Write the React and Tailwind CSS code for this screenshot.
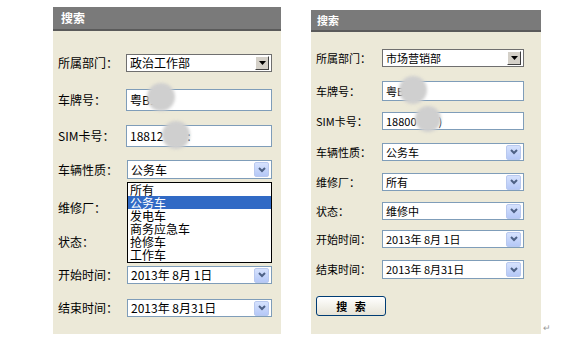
import React from "react";

const font = "font-['Noto_Sans_CJK_SC','Noto_Sans',sans-serif]";

function ClassicArrow() {
  return (
    <div className="w-[14px] h-[14px] bg-[#d4d0c8] border-t border-l border-t-white border-l-white border-b border-r border-b-[#404040] border-r-[#404040] flex items-center justify-center">
      <svg width="7" height="4" viewBox="0 0 7 4">
        <path d="M0 0h7L3.5 4z" fill="#000" />
      </svg>
    </div>
  );
}

function XpArrow() {
  return (
    <div className="w-[15px] h-[15px] rounded-[2px] bg-gradient-to-b from-[#d6e2fd] to-[#b5c8f7] border border-[#b9c9ef] flex items-center justify-center">
      <svg width="8" height="6" viewBox="0 0 8 6">
        <path d="M1 1l3 3 3-3" stroke="#4d6185" strokeWidth="2" fill="none" />
      </svg>
    </div>
  );
}

function Select({ value, classic, h, text }) {
  return (
    <div
      className={`flex items-center justify-between bg-white pl-[3px] pr-[2px] ${h} ${text} ${
        classic ? "border border-[#6f6f6f]" : "border border-[#7f9db9]"
      }`}
    >
      <span className="leading-none">{value}</span>
      {classic ? <ClassicArrow /> : <XpArrow />}
    </div>
  );
}

function Input({ children, h, text }) {
  return (
    <div className={`relative flex items-center bg-white border border-[#7f9db9] pl-[3px] overflow-hidden ${h} ${text}`}>
      <span className="leading-none whitespace-nowrap">{children}</span>
    </div>
  );
}

function Blur({ className }) {
  return <div className={`absolute rounded-full bg-[#cfcfcf] blur-[1.5px] ${className}`} />;
}

function Row({ label, mt, children, lw, labelText }) {
  return (
    <div className={`flex items-center ${mt}`}>
      <div className={`${lw} ${labelText} shrink-0 leading-none`}>{label}</div>
      {children}
    </div>
  );
}

export default function App() {
  const items = ["所有", "公务车", "发电车", "商务应急车", "抢修车", "工作车"];
  const L = "text-[12px]";
  const R = "text-[11px]";

  return (
    <div className={`relative w-[580px] h-[346px] bg-white overflow-hidden text-black ${font}`}>
      <div className="flex pl-[53px] gap-[30px]">
        {/* 左侧面板 */}
        <div className="w-[228px] mt-[7px] bg-[#ece9d8] pb-[15px]">
          <div className="h-[24px] bg-[#7a7a7a] border-b-2 border-[#5a5a5a] flex items-center pl-[8px] text-white font-bold text-[12px]">
            搜索
          </div>
          <div className="pl-[5px] pr-[9px]">
            <Row label="所属部门：" mt="mt-[23px]" lw="w-[68px]" labelText={L}>
              <div className="flex-1">
                <Select value="政治工作部" classic h="h-[18px]" text={L} />
              </div>
            </Row>
            <Row label="车牌号：" mt="mt-[17px]" lw="w-[68px]" labelText={L}>
              <div className="flex-1 relative">
                <Input h="h-[22px]" text={L}>粤B1</Input>
                <Blur className="w-[28px] h-[28px] left-[21px] top-[-6px]" />
              </div>
            </Row>
            <Row label="SIM卡号：" mt="mt-[14px]" lw="w-[68px]" labelText={L}>
              <div className="flex-1 relative">
                <Input h="h-[22px]" text={L}>
                  18812<span className="inline-block w-[24px]" />:
                </Input>
                <Blur className="w-[28px] h-[28px] left-[36px] top-[-4px]" />
              </div>
            </Row>
            <Row label="车辆性质：" mt="mt-[13px]" lw="w-[69px]" labelText={L}>
              <div className="flex-1 relative">
                <Select value="公务车" h="h-[19px]" text={L} />
                <div className="absolute z-10 left-0 right-0 top-[22px] h-[81px] bg-white border border-black text-[12px] leading-[13px]">
                  {items.map((it) => (
                    <div
                      key={it}
                      className={`h-[13px] pl-[2px] ${it === "公务车" ? "bg-[#316ac5] text-white" : ""}`}
                    >
                      {it}
                    </div>
                  ))}
                </div>
              </div>
            </Row>
            {/* 下拉列表遮住的两行 */}
            <Row label="维修厂：" mt="mt-[19px]" lw="w-[69px]" labelText={L}>
              <div className="flex-1">
                <Select value="" h="h-[19px]" text={L} />
              </div>
            </Row>
            <Row label="状态：" mt="mt-[15px]" lw="w-[69px]" labelText={L}>
              <div className="flex-1">
                <Select value="" h="h-[19px]" text={L} />
              </div>
            </Row>
            <Row label="开始时间：" mt="mt-[15px]" lw="w-[69px]" labelText={L}>
              <div className="flex-1">
                <Select value="2013年 8月 1日" h="h-[18px]" text={L} />
              </div>
            </Row>
            <Row label="结束时间：" mt="mt-[15px]" lw="w-[69px]" labelText={L}>
              <div className="flex-1">
                <Select value="2013年 8月31日" h="h-[18px]" text={L} />
              </div>
            </Row>
          </div>
        </div>

        {/* 右侧面板 */}
        <div className="w-[230px] mt-[10px] bg-[#ece9d8] pb-[18px]">
          <div className="h-[22px] bg-[#7a7a7a] border-b-2 border-[#5a5a5a] flex items-center pl-[6px] text-white font-bold text-[11px]">
            搜索
          </div>
          <div className="pl-[5px] pr-[17px]">
            <Row label="所属部门：" mt="mt-[17px]" lw="w-[66px]" labelText={R}>
              <div className="flex-1">
                <Select value="市场营销部" classic h="h-[18px]" text={R} />
              </div>
            </Row>
            <Row label="车牌号：" mt="mt-[14px]" lw="w-[66px]" labelText={R}>
              <div className="flex-1 relative">
                <Input h="h-[20px]" text={R}>粤B1</Input>
                <Blur className="w-[28px] h-[28px] left-[17px] top-[-5px]" />
              </div>
            </Row>
            <Row label="SIM卡号：" mt="mt-[11px]" lw="w-[66px]" labelText={R}>
              <div className="flex-1 relative">
                <Input h="h-[18px]" text={R}>
                  18800<span className="inline-block w-[22px]" />)
                </Input>
                <Blur className="w-[26px] h-[26px] left-[33px] top-[-6px]" />
              </div>
            </Row>
            <Row label="车辆性质：" mt="mt-[13px]" lw="w-[66px]" labelText={R}>
              <div className="flex-1">
                <Select value="公务车" h="h-[18px]" text={R} />
              </div>
            </Row>
            <Row label="维修厂：" mt="mt-[12px]" lw="w-[66px]" labelText={R}>
              <div className="flex-1">
                <Select value="所有" h="h-[18px]" text={R} />
              </div>
            </Row>
            <Row label="状态：" mt="mt-[11px]" lw="w-[66px]" labelText={R}>
              <div className="flex-1">
                <Select value="维修中" h="h-[18px]" text={R} />
              </div>
            </Row>
            <Row label="开始时间：" mt="mt-[10px]" lw="w-[66px]" labelText={R}>
              <div className="flex-1">
                <Select value="2013年 8月 1日" h="h-[18px]" text={R} />
              </div>
            </Row>
            <Row label="结束时间：" mt="mt-[12px]" lw="w-[66px]" labelText={R}>
              <div className="flex-1">
                <Select value="2013年 8月31日" h="h-[19px]" text={R} />
              </div>
            </Row>
            <button className="mt-[17px] w-[70px] h-[20px] rounded-[3px] border border-[#003c74] bg-gradient-to-b from-white to-[#e6e3d6] text-[11px] font-bold leading-none flex items-center justify-center">
              搜&nbsp;&nbsp;&nbsp;索
            </button>
          </div>
        </div>
      </div>
      <span className="absolute left-[543px] top-[323px] text-[9px] text-[#999] leading-none">↵</span>
    </div>
  );
}
